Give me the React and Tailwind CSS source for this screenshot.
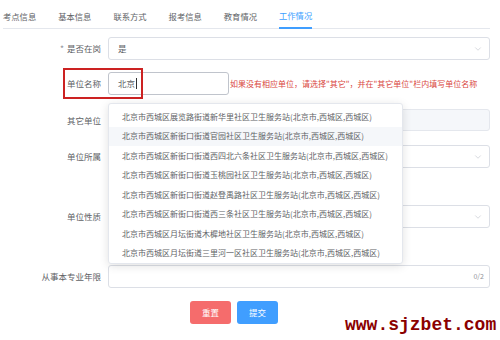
import { ChevronDown } from "lucide-react";

const tabs = ["考点信息", "基本信息", "联系方式", "报考信息", "教育情况", "工作情况"];

const options = [
  "北京市西城区展览路街道新华里社区卫生服务站(北京市,西城区,西城区)",
  "北京市西城区新街口街道官园社区卫生服务站(北京市,西城区,西城区)",
  "北京市西城区新街口街道西四北六条社区卫生服务站(北京市,西城区,西城区)",
  "北京市西城区新街口街道玉桃园社区卫生服务站(北京市,西城区,西城区)",
  "北京市西城区新街口街道赵登禹路社区卫生服务站(北京市,西城区,西城区)",
  "北京市西城区新街口街道西三条社区卫生服务站(北京市,西城区,西城区)",
  "北京市西城区月坛街道木樨地社区卫生服务站(北京市,西城区,西城区)",
  "北京市西城区月坛街道三里河一区社区卫生服务站(北京市,西城区,西城区)",
];

function Label({ children }) {
  return (
    <div className="w-[101px] shrink-0 text-right text-[8.5px] text-[#606266] leading-none">
      {children}
    </div>
  );
}

function Select({ value }) {
  return (
    <div className="flex h-[23px] flex-1 items-center justify-between rounded-[3px] border border-[#dcdfe6] bg-white pl-[9px] pr-[6px]">
      <span className="text-[8.5px] text-[#606266]">{value}</span>
      <ChevronDown size={10} strokeWidth={1.5} className="text-[#c0c4cc]" />
    </div>
  );
}

export default function App() {
  return (
    <div
      className="relative h-[340px] w-[500px] overflow-hidden bg-white"
      style={{ fontFamily: '"Noto Sans CJK SC", "Noto Sans", sans-serif' }}
    >
      {/* tabs */}
      <div className="mx-[3px] mr-[10px] flex h-[29px] gap-[22px] border-b border-[#e4e7ed]">
        {tabs.map((t, i) => (
          <div
            key={t}
            className={
              i === 5
                ? "flex h-[29px] items-center border-b-2 border-[#409eff] pt-[4px] text-[8.3px] text-[#409eff]"
                : "flex h-[29px] items-center pt-[4px] text-[8.3px] text-[#606266]"
            }
          >
            {t}
          </div>
        ))}
      </div>

      <div className="flex flex-col pr-[10px]">
        {/* 是否在岗 */}
        <div className="mt-[8px] flex items-center gap-[7px]">
          <Label>
            <span className="mr-[3px] text-[#909399]">*</span>是否在岗
          </Label>
          <Select value="是" />
        </div>

        {/* 单位名称 */}
        <div className="relative mt-[12px] flex items-center gap-[7px]">
          <Label>单位名称</Label>
          <div className="flex h-[23px] w-[121px] items-center rounded-[3px] border border-[#c0c4cc] bg-white pl-[9px]">
            <span className="text-[8.5px] text-[#606266]">北京</span>
            <span className="ml-[1px] h-[11px] w-px bg-[#303133]" />
          </div>
          <span className="ml-[-6px] whitespace-nowrap text-[8px] text-[#d9463e]">
            如果没有相应单位，请选择"其它"，并在"其它单位"栏内填写单位名称
          </span>
          <div className="absolute left-[63px] top-[-4px] h-[31px] w-[80px] border-2 border-[#cc2222]" />
        </div>

        {/* 其它单位 */}
        <div className="mt-[14px] flex items-center gap-[7px]">
          <Label>其它单位</Label>
          <div className="h-[22px] flex-1 rounded-[3px] border border-[#e4e7ed] bg-[#f5f7fa]" />
        </div>

        {/* 单位所属 */}
        <div className="mt-[14px] flex items-center gap-[7px]">
          <Label>单位所属</Label>
          <Select value="" />
        </div>

        {/* 单位性质 */}
        <div className="mt-[37px] flex items-center gap-[7px]">
          <Label>单位性质</Label>
          <Select value="" />
        </div>

        {/* 从事本专业年限 */}
        <div className="mt-[37px] flex items-center gap-[7px]">
          <Label>从事本专业年限</Label>
          <div className="flex h-[23px] flex-1 items-center justify-end rounded-[3px] border border-[#dcdfe6] bg-white pr-[5px]">
            <span className="text-[7px] text-[#909399]">0/2</span>
          </div>
        </div>

        {/* buttons */}
        <div className="mt-[13px] flex gap-[6px] pl-[190px]">
          <button className="h-[23px] w-[41px] rounded-[3px] bg-[#f56c6c] text-[8.5px] text-white">
            重置
          </button>
          <button className="h-[23px] w-[41px] rounded-[3px] bg-[#409eff] text-[8.5px] text-white">
            提交
          </button>
        </div>
      </div>

      {/* autocomplete dropdown */}
      <div className="absolute left-[108px] top-[103px] h-[161px] w-[295px] overflow-hidden rounded-[3px] border border-[#e4e7ed] bg-white pt-[3px] shadow-[0_2px_10px_rgba(0,0,0,0.12)]">
        {options.map((o, i) => (
          <div
            key={o}
            className={
              i === 1
                ? "flex h-[19.5px] items-center whitespace-nowrap bg-[#f5f7fa] pl-[13px] text-[8px] text-[#606266]"
                : "flex h-[19.5px] items-center whitespace-nowrap pl-[13px] text-[8px] text-[#606266]"
            }
          >
            {o}
          </div>
        ))}
      </div>

      {/* watermark */}
      <div
        className="absolute left-[345px] top-[316px] text-[18px] font-black leading-none text-[#8b0000]"
        style={{ fontFamily: '"Liberation Mono", monospace' }}
      >
        www.sjzbet.com
      </div>
    </div>
  );
}
